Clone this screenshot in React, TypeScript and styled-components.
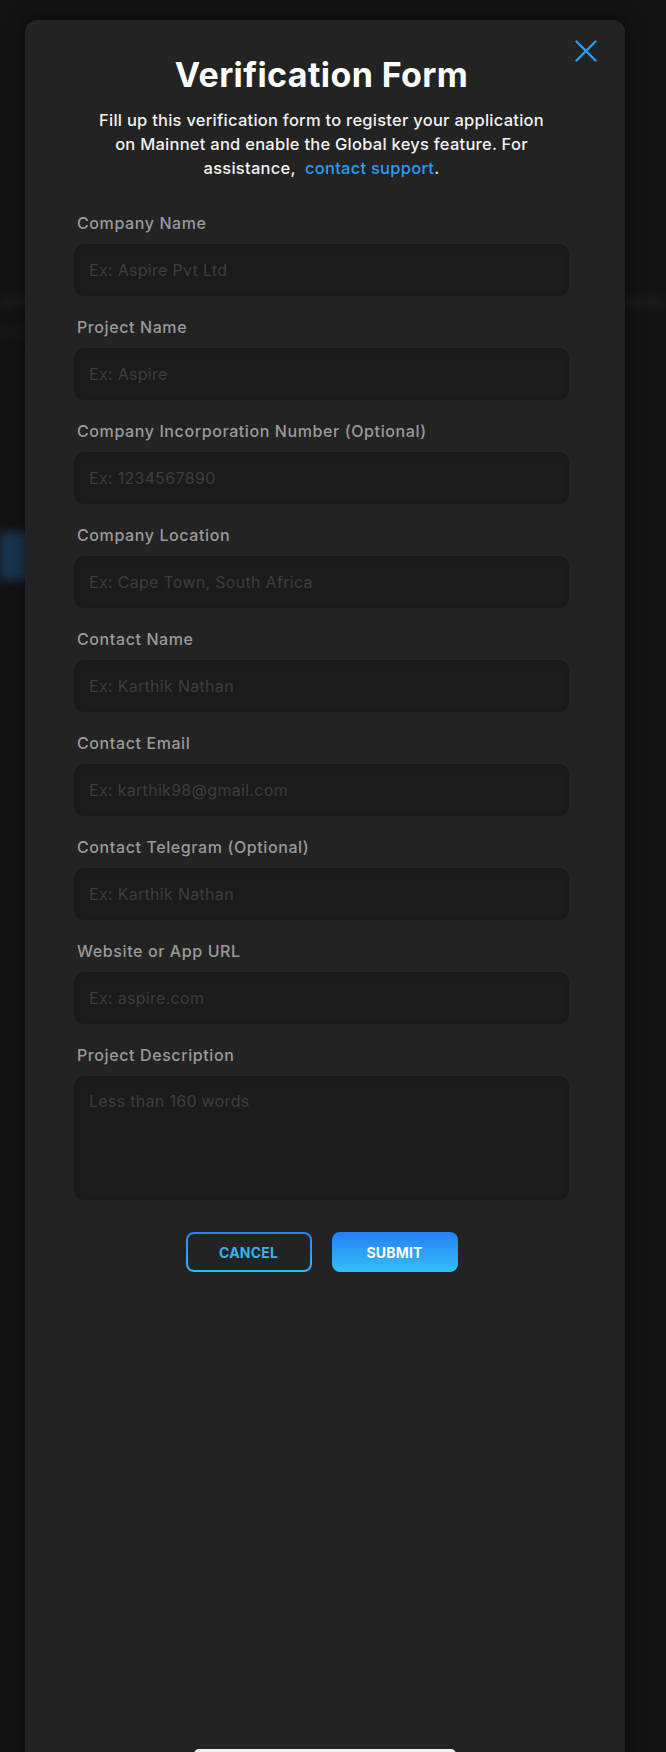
import React from "react";
import styled, { createGlobalStyle } from "styled-components";

const Global = createGlobalStyle`
  html, body {
    margin: 0;
    padding: 0;
    height: 1752px;
    overflow: hidden;
    background: #131313;
  }
  * { box-sizing: border-box; }
  #root { position: relative; height: 1752px; overflow: hidden; }
`;

const Backdrop = styled.div`
  display: flex;
  flex-direction: column;
  height: 1752px;
  background: #131313;
`;

const BlurLine = styled.div<{ $top: number; $h: number; $color: string; $w?: string }>`
  margin-top: ${(p) => p.$top}px;
  height: ${(p) => p.$h}px;
  width: ${(p) => p.$w ?? "100%"};
  background: ${(p) => p.$color};
  filter: blur(4px);
`;

const Modal = styled.div`
  position: absolute;
  top: 20px;
  left: 25px;
  width: 600px;
  height: 1800px;
  background: #232323;
  border-radius: 12px 12px 0 0;
  box-shadow: 0 0 18px rgba(0, 0, 0, 0.55);
  display: flex;
  flex-direction: column;
  align-items: center;
  padding-top: 35px;
  font-family: Inter, "Noto Sans", sans-serif;
`;

const CloseButton = styled.button`
  position: absolute;
  top: 18px;
  right: 26px;
  width: 26px;
  height: 26px;
  padding: 0;
  border: none;
  background: transparent;
  display: flex;
  align-items: center;
  justify-content: center;
  cursor: pointer;
`;

const Content = styled.div`
  width: 100%;
  padding: 0 56px 0 49px;
  display: flex;
  flex-direction: column;
  align-items: center;
`;

const Title = styled.h1`
  margin: 0;
  font-size: 34px;
  line-height: 40px;
  font-weight: 700;
  color: #ffffff;
  letter-spacing: 0.4px;
`;

const Intro = styled.p`
  margin: 13px 0 0;
  font-size: 16.5px;
  line-height: 24px;
  font-weight: 500;
  color: #f2f2f2;
  text-align: center;
  letter-spacing: 0.25px;
`;

const SupportLink = styled.a`
  color: #2b9cf2;
  text-decoration: none;
`;

const Form = styled.form`
  width: 100%;
  margin-top: 33px;
  display: flex;
  flex-direction: column;
  gap: 21px;
`;

const Field = styled.label`
  display: flex;
  flex-direction: column;
  gap: 11px;
`;

const LabelText = styled.span`
  padding-left: 3px;
  font-size: 16px;
  line-height: 20px;
  font-weight: 500;
  color: #9a9a9a;
  letter-spacing: 0.6px;
`;

const inputBase = `
  width: 100%;
  border: none;
  outline: none;
  border-radius: 10px;
  background: #1b1b1b;
  padding: 0 16px 0 15px;
  font-family: Inter, "Noto Sans", sans-serif;
  font-size: 16px;
  letter-spacing: 0.3px;
  color: #dddddd;
  box-shadow: inset 0 0 6px rgba(0,0,0,0.15);
  &::placeholder { color: #3e3e3e; }
`;

const TextInput = styled.input`
  ${inputBase}
  height: 52px;
`;

const TextArea = styled.textarea`
  ${inputBase}
  height: 124px;
  padding-top: 15px;
  resize: none;
  line-height: 20px;
`;

const Actions = styled.div`
  margin-top: 32px;
  display: flex;
  justify-content: center;
  gap: 20px;
`;

const Button = styled.button<{ $primary?: boolean }>`
  width: 126px;
  height: 40px;
  border-radius: 8px;
  font-family: Inter, "Noto Sans", sans-serif;
  font-size: 14px;
  font-weight: 700;
  letter-spacing: 0.2px;
  cursor: pointer;
  border: ${(p) => (p.$primary ? "none" : "2px solid transparent")};
  color: ${(p) => (p.$primary ? "#ffffff" : "#37b4f0")};
  background: ${(p) =>
    p.$primary
      ? "linear-gradient(180deg, #2480f5 0%, #36bdf7 100%)"
      : "linear-gradient(#232323, #232323) padding-box, linear-gradient(180deg, #2684f4, #33b8f5) border-box"};
`;

const BottomSheet = styled.div`
  margin-top: 477px;
  width: 262px;
  height: 40px;
  border-radius: 5px 5px 0 0;
  background: #f1f1f4;
  flex-shrink: 0;
`;

const fields = [
  { label: "Company Name", placeholder: "Ex: Aspire Pvt Ltd" },
  { label: "Project Name", placeholder: "Ex: Aspire" },
  { label: "Company Incorporation Number (Optional)", placeholder: "Ex: 1234567890" },
  { label: "Company Location", placeholder: "Ex: Cape Town, South Africa" },
  { label: "Contact Name", placeholder: "Ex: Karthik Nathan" },
  { label: "Contact Email", placeholder: "Ex: karthik98@gmail.com" },
  { label: "Contact Telegram (Optional)", placeholder: "Ex: Karthik Nathan" },
  { label: "Website or App URL", placeholder: "Ex: aspire.com" },
];

export default function App() {
  return (
    <>
      <Global />
      <Backdrop>
        <BlurLine $top={297} $h={9} $color="#1d1d1d" />
        <BlurLine $top={22} $h={8} $color="#181818" $w="60px" />
        <BlurLine $top={196} $h={48} $color="#183650" $w="120px" />
      </Backdrop>
      <Modal>
        <CloseButton aria-label="Close">
          <svg width="22" height="22" viewBox="0 0 22 22">
            <path d="M1.5 1.5 L20.5 20.5 M20.5 1.5 L1.5 20.5" stroke="#2a9df4" strokeWidth="2.4" strokeLinecap="round" />
          </svg>
        </CloseButton>
        <Content>
          <Title>Verification Form</Title>
          <Intro>
            Fill up this verification form to register your application
            <br />
            on Mainnet and enable the Global keys feature. For
            <br />
            assistance,&nbsp; <SupportLink href="#">contact support</SupportLink>.
          </Intro>
          <Form onSubmit={(e) => e.preventDefault()}>
            {fields.map((f) => (
              <Field key={f.label}>
                <LabelText>{f.label}</LabelText>
                <TextInput placeholder={f.placeholder} />
              </Field>
            ))}
            <Field>
              <LabelText>Project Description</LabelText>
              <TextArea placeholder="Less than 160 words" />
            </Field>
          </Form>
          <Actions>
            <Button type="button">CANCEL</Button>
            <Button type="button" $primary>
              SUBMIT
            </Button>
          </Actions>
        </Content>
        <BottomSheet />
      </Modal>
    </>
  );
}
